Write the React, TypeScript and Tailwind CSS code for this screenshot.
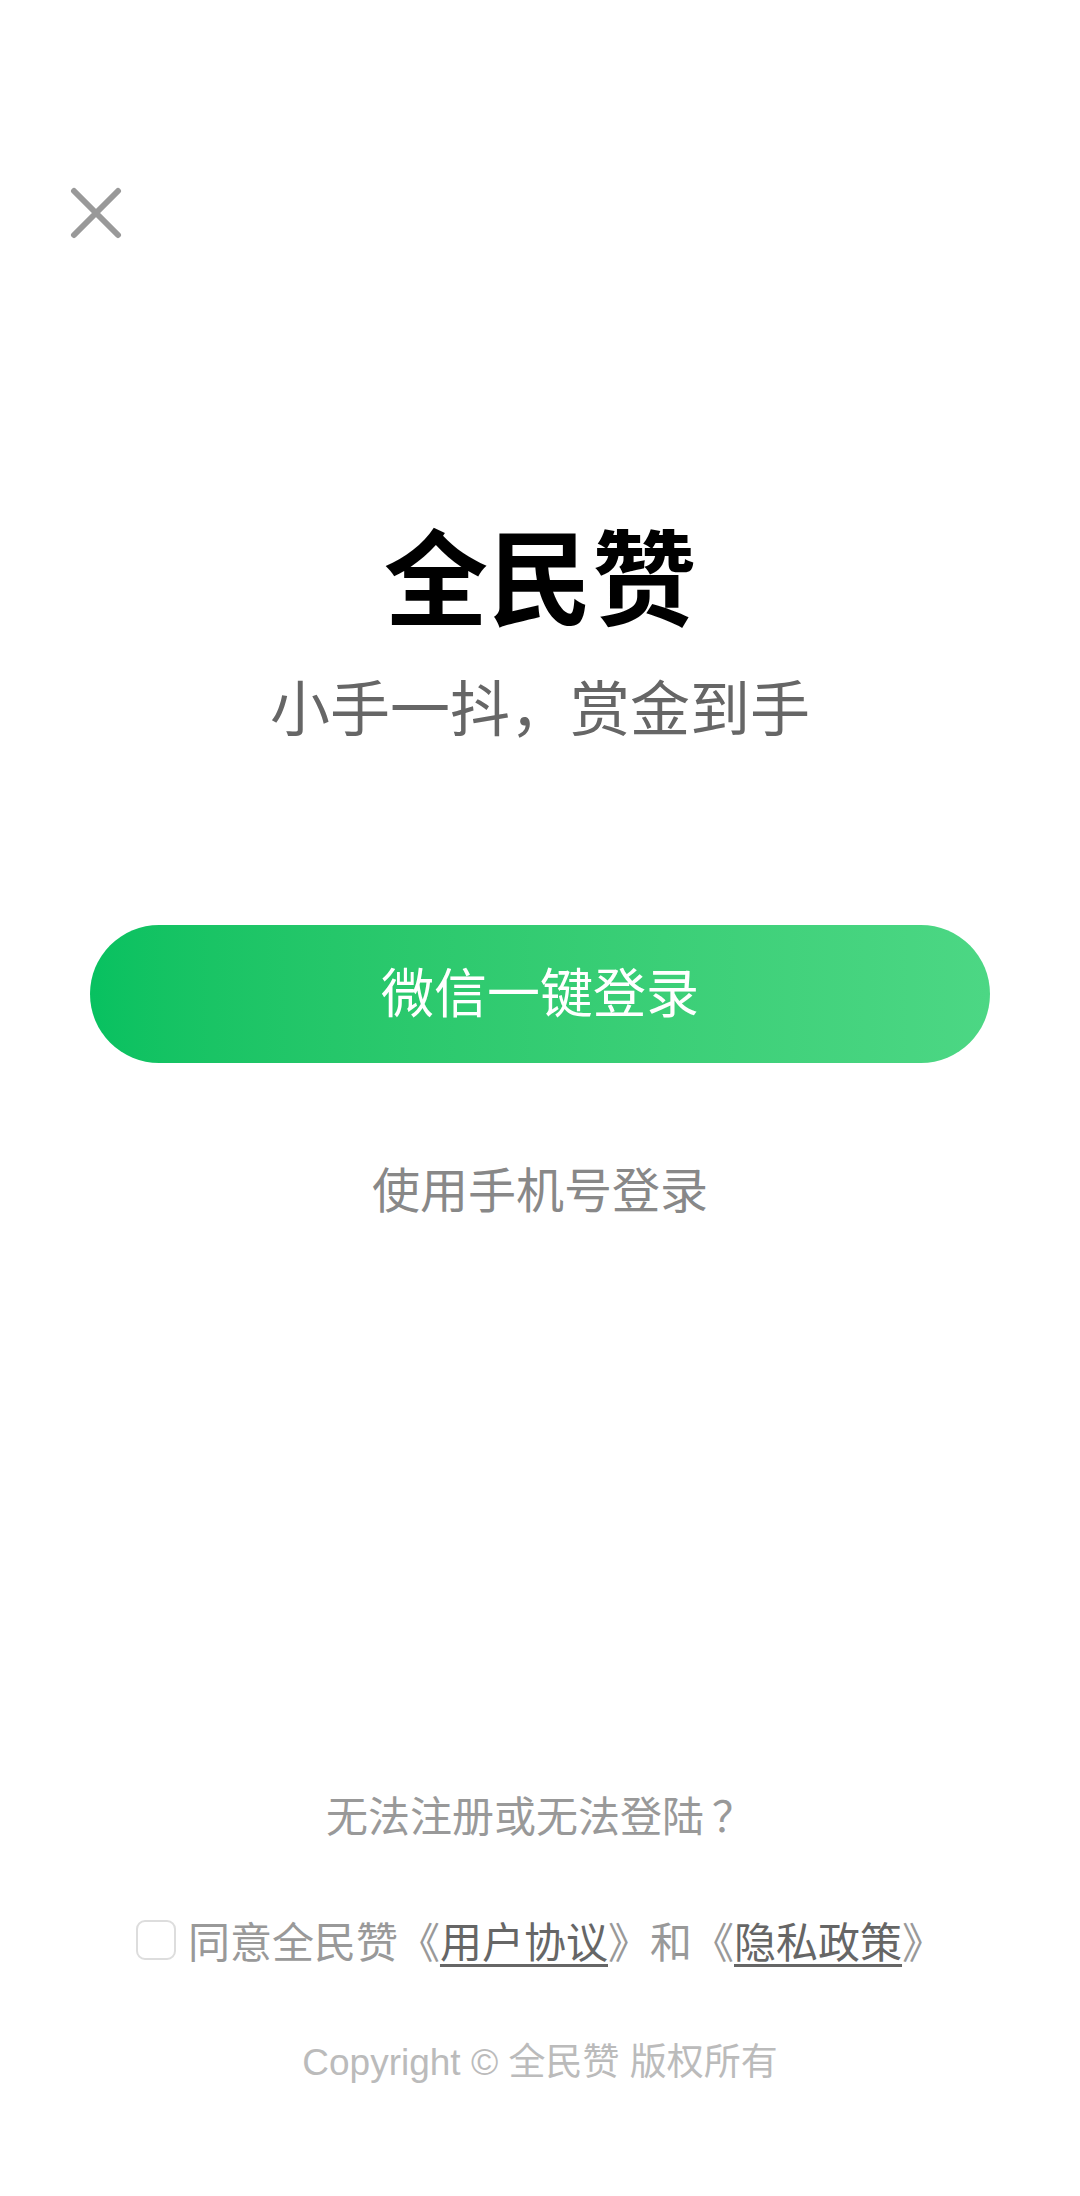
export default function App() {
  const cjk = "font-['Noto_Sans_CJK_SC',sans-serif]";
  return (
    <div className={`w-[1080px] h-[2196px] bg-white flex flex-col ${cjk}`}>
      <div className="pl-[70px] pt-[187px]">
        <svg width="52" height="52" viewBox="0 0 52 52" fill="none">
          <path d="M4 4 L48 48 M48 4 L4 48" stroke="#999999" strokeWidth="6" strokeLinecap="round" />
        </svg>
      </div>

      <h1 className="mt-[282px] text-center text-[104px] leading-[104px] font-bold text-black">全民赞</h1>
      <p className="mt-[50px] text-center text-[60px] leading-[60px] text-[#666666]">小手一抖，赏金到手</p>

      <button className="mt-[190px] mx-[90px] h-[138px] rounded-full bg-linear-to-r from-[#07c160] to-[#4cd784] text-white text-[53px] leading-none flex items-center justify-center pb-[8px]">
        微信一键登录
      </button>

      <p className="mt-[100px] text-center text-[48px] leading-[48px] text-[#888888]">使用手机号登录</p>

      <p className="mt-[582px] text-center text-[42px] leading-[42px] text-[#999999]">
        无法注册或无法登陆<span className="ml-[8px]">？</span>
      </p>

      <div className="mt-[84px] flex items-center justify-center gap-[12px] text-[42px] leading-[42px] text-[#999999]">
        <span className="w-[40px] h-[40px] rounded-[9px] border-2 border-[#dddddd] shrink-0" />
        <span>
          同意全民赞《<span className="text-[#666666] underline underline-offset-[6px] decoration-[3px]">用户协议</span>》和《
          <span className="text-[#666666] underline underline-offset-[6px] decoration-[3px]">隐私政策</span>》
        </span>
      </div>

      <p className="mt-[83px] text-center text-[37px] leading-[37px] text-[#bbbbbb] font-['Liberation_Sans','Noto_Sans_CJK_SC',sans-serif]">
        Copyright © 全民赞 版权所有
      </p>
    </div>
  );
}
